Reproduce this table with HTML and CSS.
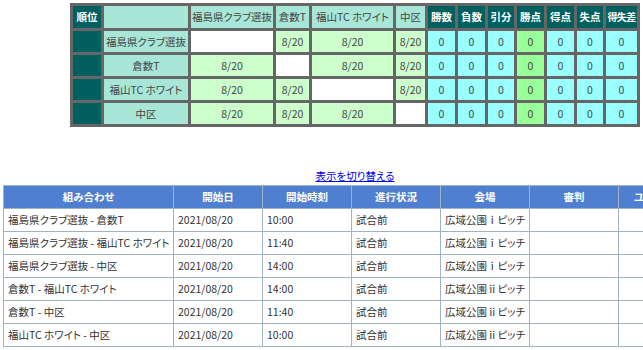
FILE: index.html
```html
<!DOCTYPE html>
<html lang="ja">
<head>
<meta charset="utf-8">
<link rel="stylesheet" href="styles.css">
</head>
<body>
<div class="wrap">
  <table class="league">
    <colgroup>
      <col style="width:28px"><col style="width:84px"><col style="width:82px"><col style="width:33px"><col style="width:81px"><col style="width:29px">
      <col style="width:27px"><col style="width:27px"><col style="width:26px"><col style="width:27px"><col style="width:27px"><col style="width:26px"><col style="width:31px">
    </colgroup>
    <tr class="hrow">
      <th class="dark">順位</th><th class="lt"></th>
      <th class="lt">福島県クラブ選抜</th><th class="lt">倉数T</th><th class="lt">福山TC ホワイト</th><th class="lt">中区</th>
      <th class="dark">勝数</th><th class="dark">負数</th><th class="dark">引分</th><th class="dark">勝点</th><th class="dark">得点</th><th class="dark">失点</th><th class="dark tight">得失差</th>
    </tr>
    <tr>
      <td class="dark"></td><td class="lt">福島県クラブ選抜</td>
      <td class="wh"></td><td class="gr">8/20</td><td class="gr">8/20</td><td class="gr">8/20</td>
      <td class="cy">0</td><td class="cy">0</td><td class="cy">0</td><td class="pt">0</td><td class="cy">0</td><td class="cy">0</td><td class="cy">0</td>
    </tr>
    <tr>
      <td class="dark"></td><td class="lt">倉数T</td>
      <td class="gr">8/20</td><td class="wh"></td><td class="gr">8/20</td><td class="gr">8/20</td>
      <td class="cy">0</td><td class="cy">0</td><td class="cy">0</td><td class="pt">0</td><td class="cy">0</td><td class="cy">0</td><td class="cy">0</td>
    </tr>
    <tr>
      <td class="dark"></td><td class="lt">福山TC ホワイト</td>
      <td class="gr">8/20</td><td class="gr">8/20</td><td class="wh"></td><td class="gr">8/20</td>
      <td class="cy">0</td><td class="cy">0</td><td class="cy">0</td><td class="pt">0</td><td class="cy">0</td><td class="cy">0</td><td class="cy">0</td>
    </tr>
    <tr>
      <td class="dark"></td><td class="lt">中区</td>
      <td class="gr">8/20</td><td class="gr">8/20</td><td class="gr">8/20</td><td class="wh"></td>
      <td class="cy">0</td><td class="cy">0</td><td class="cy">0</td><td class="pt">0</td><td class="cy">0</td><td class="cy">0</td><td class="cy">0</td>
    </tr>
  </table>

  <div class="switch"><a href="#">表示を切り替える</a></div>

  <table class="games">
    <colgroup>
      <col style="width:170px"><col style="width:89px"><col style="width:89px"><col style="width:89px"><col style="width:89px"><col style="width:89px"><col style="width:89px">
    </colgroup>
    <tr>
      <th>組み合わせ</th><th>開始日</th><th>開始時刻</th><th>進行状況</th><th>会場</th><th>審判</th><th>ユニフォーム</th>
    </tr>
    <tr><td>福島県クラブ選抜 - 倉数T</td><td>2021/08/20</td><td>10:00</td><td>試合前</td><td>広域公園ⅰピッチ</td><td></td><td></td></tr>
    <tr><td>福島県クラブ選抜 - 福山TC ホワイト</td><td>2021/08/20</td><td>11:40</td><td>試合前</td><td>広域公園ⅰピッチ</td><td></td><td></td></tr>
    <tr><td>福島県クラブ選抜 - 中区</td><td>2021/08/20</td><td>14:00</td><td>試合前</td><td>広域公園ⅰピッチ</td><td></td><td></td></tr>
    <tr><td>倉数T - 福山TC ホワイト</td><td>2021/08/20</td><td>14:00</td><td>試合前</td><td>広域公園ⅱピッチ</td><td></td><td></td></tr>
    <tr><td>倉数T - 中区</td><td>2021/08/20</td><td>11:40</td><td>試合前</td><td>広域公園ⅱピッチ</td><td></td><td></td></tr>
    <tr><td>福山TC ホワイト - 中区</td><td>2021/08/20</td><td>10:00</td><td>試合前</td><td>広域公園ⅱピッチ</td><td></td><td></td></tr>
  </table>
</div>
</body>
</html>
```

FILE: styles.css
```css
html, body {
  margin: 0;
  padding: 0;
  background: #fff;
  overflow-x: hidden;
}
body {
  font-family: "Noto Sans CJK JP", "Noto Sans", sans-serif;
  font-size: 10.5px;
  font-feature-settings: "palt";
  color: #333;
}
.wrap {
  width: 704px;
  padding: 3px 0 0 3px;
}
.league {
  margin: 0 auto;
  border-collapse: separate;
  border-spacing: 3px;
  background: #666;
  table-layout: fixed;
  width: 570px;
}
.league th, .league td {
  padding: 0;
  text-align: center;
  vertical-align: middle;
  font-weight: normal;
  height: 21px;
  line-height: 14px;
  white-space: nowrap;
  overflow: hidden;
  color: #444;
}
.league .hrow th { height: 22px; }
.league .dark { background: #006060; color: #fff; font-weight: bold; }
.league .tight { letter-spacing: -0.6px; font-size: 10px; }
.league .lt { background: #a8e6d8; }
.league .gr { background: #ccffcc; }
.league .wh { background: #fff; }
.league .cy { background: #99ffff; }
.league .pt { background: #99ff99; }

.switch {
  margin-top: 42px;
  text-align: center;
  line-height: 14px;
  height: 14px;
  margin-bottom: 2px;
}
.switch a { color: #0000ee; text-decoration: underline; }

.games {
  border-collapse: collapse;
  table-layout: fixed;
  width: 704px;
}
.games tr { height: 23px; }
.games th, .games td {
  border: 1px solid #9fb2c6;
  height: 23px;
  padding: 0 0 0 4px;
  line-height: 14px;
  white-space: nowrap;
  overflow: hidden;
  box-sizing: border-box;
}
.games th {
  background: #4f7fd0;
  color: #fff;
  font-weight: bold;
  text-align: center;
  padding: 0;
}
.games td { text-align: left; }
```
